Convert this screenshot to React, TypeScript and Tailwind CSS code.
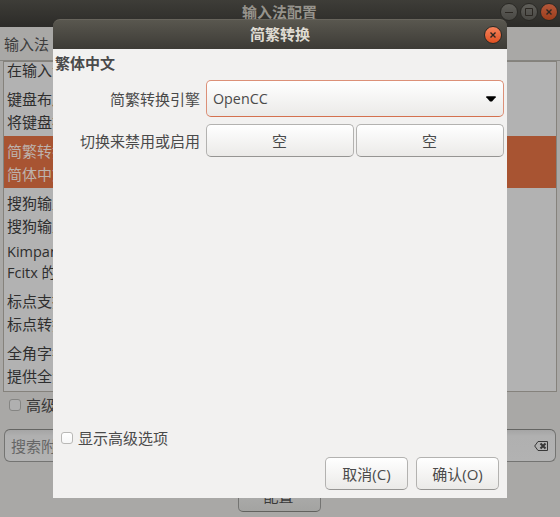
import type { ReactNode } from 'react';

type Addon = { name: string; description: string; selected?: boolean; latin?: boolean; low?: boolean };

const addons: Addon[] = [
  { name: '键盘布局', description: '将键盘布', low: true },
  { name: '简繁转换', description: '简体中文', selected: true, low: true },
  { name: '搜狗输入', description: '搜狗输入', low: true },
  { name: 'Kimpanel', description: 'Fcitx 的', latin: true },
  { name: '标点支持', description: '标点转换' },
  { name: '全角字符', description: '提供全角' },
];

function AddonRow({ name, description, selected, latin, low }: Addon) {
  return (
    <div
      className={`flex shrink-0 flex-col justify-center pl-[3px] ${latin ? 'h-[47px] pb-[4px] text-[14.5px]' : 'h-[52px]'} ${
        low ? 'pt-[2px]' : ''
      } ${selected ? 'bg-[#a85432] text-[#bdb2ac]' : 'text-[#2e2e2e]'}`}
    >
      <div className={latin ? 'h-[21px] leading-[21px]' : 'h-[23px] leading-[23px]'}>{name}</div>
      <div className={latin ? 'h-[21px] leading-[21px]' : 'h-[23px] leading-[23px]'}>{description}</div>
    </div>
  );
}

function WindowButton({ kind, dim }: { kind: 'min' | 'max' | 'close'; dim?: boolean }) {
  const color =
    kind === 'close'
      ? dim
        ? 'bg-linear-to-b from-[#b4583a] to-[#9c3d1b]'
        : 'bg-linear-to-b from-[#f5835b] to-[#e0501f]'
      : 'bg-linear-to-b from-[#605f5a] to-[#494844]';
  return (
    <span className={`flex size-[18px] items-center justify-center rounded-full border border-[#2a2925] ${color}`}>
      <svg width="16" height="16" viewBox="0 0 16 16" fill="none" stroke="#2b2722" strokeWidth={kind === 'close' ? 1.4 : 1}>
        {kind === 'min' && <path d="M4 8.500h8" />}
        {kind === 'max' && <path d="M4.500 4.500h7v7h-7z" />}
        {kind === 'close' && <path d="M5.500 5.500l5 5M10.500 5.500l-5 5" />}
      </svg>
    </span>
  );
}

function Button({ children, className = '' }: { children: ReactNode; className?: string }) {
  return (
    <button
      className={`flex h-[33px] items-center justify-center rounded-[5px] border border-[#b3b2b0] border-b-[#969593] bg-linear-to-b from-white to-[#ebeae8] text-[#4a4a4a] ${className}`}
    >
      {children}
    </button>
  );
}

function SettingsDialog() {
  return (
    <section className="absolute top-[19px] left-[53px] flex h-[479px] w-[454px] flex-col text-[#4a4a4a]">
      <header className="flex h-[30px] shrink-0 items-center rounded-t-[7px] border-t border-[#67645c] bg-linear-to-b from-[#59574f] to-[#3d3b36] pr-[5px]">
        <h2 className="flex-1 pb-[2px] pl-[23px] text-center font-bold text-[#dfdbd2]">简繁转换</h2>
        <WindowButton kind="close" />
      </header>
      <div className="flex flex-1 flex-col bg-[#f2f1f0]">
        <h3 className="h-[28px] pl-[2px] leading-[28px] font-bold">繁体中文</h3>
        <div className="mt-[3px] flex h-[37px] items-center pr-[3px]">
          <label className="w-[147px] text-right">简繁转换引擎</label>
          <div className="ml-[6px] flex h-[37px] flex-1 items-center justify-between rounded-[5px] border border-[#dc9078] border-b-[#d4714f] bg-linear-to-b from-white to-[#ebeae8] pr-[7px] pl-[6px]">
            <span className="text-[14.3px]">OpenCC</span>
            <svg width="10" height="6" viewBox="0 0 10 6">
              <path d="M.3.3h9.400v1L6 5.500H4L.3 1.300z" fill="#000" />
            </svg>
          </div>
        </div>
        <div className="mt-[7px] flex h-[33px] items-center pr-[3px]">
          <label className="w-[147px] text-right">切换来禁用或启用</label>
          <div className="ml-[6px] flex flex-1 gap-[2px]">
            <Button className="flex-1 pr-px">空</Button>
            <Button className="flex-1 pr-px">空</Button>
          </div>
        </div>
        <label className="mt-auto flex h-[24px] items-center pl-[8px]">
          <span className="size-[12px] rounded-[3px] border border-[#b9b8b6] bg-linear-to-b from-white to-[#f7f7f7]" />
          <span className="ml-[5px]">显示高级选项</span>
        </label>
        <footer className="mt-[7px] mb-[8px] flex justify-end gap-[8px] pr-[8px]">
          <Button className="w-[83px]">取消(C)</Button>
          <Button className="w-[83px]">确认(O)</Button>
        </footer>
      </div>
    </section>
  );
}

export default function App() {
  return (
    <main className="relative h-[517px] w-[560px] overflow-hidden bg-[#a9a8a6] font-['Open_Sans','Noto_Sans_CJK_SC',sans-serif] text-[15px] leading-[22px] whitespace-nowrap">
      <div className="flex h-full flex-col">
        <header className="flex h-[27px] shrink-0 items-start bg-linear-to-b from-[#3e3d38] to-[#2c2b28] pr-[2px]">
          <h1 className="flex-1 pt-[1px] pl-[59px] text-center font-bold text-[#96938c]">输入法配置</h1>
          <div className="flex gap-[2px] pt-[3px]">
            <WindowButton kind="min" dim />
            <WindowButton kind="max" dim />
            <WindowButton kind="close" dim />
          </div>
        </header>
        <nav className="flex h-[33px] shrink-0 items-center pl-[4px] text-[#3d3d3d]">输入法</nav>
        <div className="h-px shrink-0 bg-[#858480]" />
        <div className="mx-[3px] flex h-[331px] shrink-0 flex-col overflow-hidden border border-[#85827c] bg-[#b2b2b2]">
          <div className="h-[22px] w-[49px] shrink-0 overflow-hidden pl-[3px] leading-[17px] text-[#2e2e2e]">在输入法</div>
          {addons.map((addon) => (
            <AddonRow key={addon.name} {...addon} />
          ))}
        </div>
        <label className="flex h-[26px] shrink-0 items-center pl-[9px] text-[#383838]">
          <span className="size-[12px] rounded-[3px] border border-[#858583] bg-[#b0b0b0]" />
          <span className="ml-[5px] pb-px">高级</span>
        </label>
        <div className="mx-[4px] mt-[11px] flex h-[33px] shrink-0 items-center justify-between rounded-[6px] border border-[#747472] border-t-[#656563] bg-linear-to-b from-[#a5a5a5] via-[#b0b0b0] via-20% to-[#b2b2b2] pr-[7px] pl-[6px] text-[#666]">
          <span>搜索附加</span>
          <svg width="14" height="10" viewBox="0 0 14 10" fill="none" stroke="#383838">
            <path d="M4 .5h9.500v9H4L.7 5z" />
            <path d="M6.500 2.500l5 5M11.500 2.500l-5 5" strokeWidth="2" />
          </svg>
        </div>
        <button className="mt-[17px] mr-[1px] flex h-[33px] w-[83px] shrink-0 items-center justify-center self-center rounded-[5px] border border-[#747472] border-b-[#62625f] bg-linear-to-b from-[#b2b2b2] to-[#a3a3a1] pr-[2px] text-[#383838]">
          配置
        </button>
      </div>
      <SettingsDialog />
    </main>
  );
}
